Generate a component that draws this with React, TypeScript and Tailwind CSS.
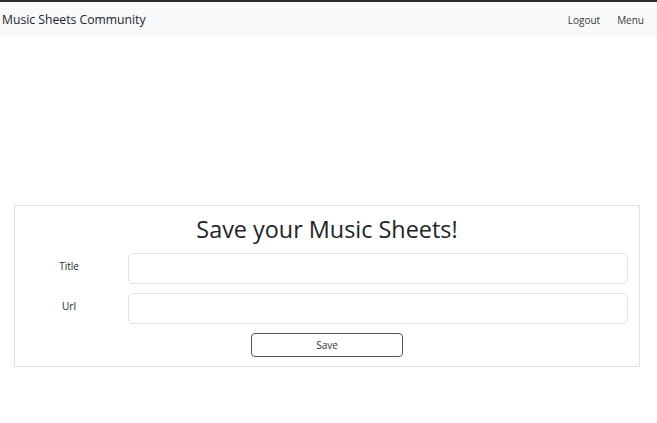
import React from "react";

export default function App() {
  return (
    <div className="w-[657px] h-[423px] bg-white text-[#212529]" style={{ fontFamily: '"Open Sans", "Noto Sans", sans-serif' }}>
      <div className="h-[2px] bg-[#2b2b2b]" />
      <nav className="h-[34px] bg-[#f8f9fa] flex items-center justify-between pl-[2px] pr-[13px]">
        <span className="text-[12.2px] mt-[2px]">Music Sheets Community</span>
        <div className="flex items-center gap-[17px] text-[10px] text-[#3b3b3b] mt-[2px]">
          <span>Logout</span>
          <span>Menu</span>
        </div>
      </nav>
      <div className="pt-[169px] pl-[14px]">
        <div className="w-[626px] h-[162px] border border-[#dee2e6] flex flex-col">
          <h1 className="text-center text-[23.4px] leading-[30px] mt-[8px]">Save your Music Sheets!</h1>
          <div className="flex items-center mt-[9px] gap-[5px]">
            <label className="w-[108px] text-center text-[10px] mt-[-4px]">Title</label>
            <div className="w-[500px] h-[31px] rounded-[5px] border border-[#dee2e6]" />
          </div>
          <div className="flex items-center mt-[9px] gap-[5px]">
            <label className="w-[108px] text-center text-[10px] mt-[-4px]">Url</label>
            <div className="w-[500px] h-[31px] rounded-[5px] border border-[#dee2e6]" />
          </div>
          <div className="flex justify-center mt-[9px]">
            <button className="w-[152px] h-[24px] rounded-[4px] border border-[#555] text-[10px] text-[#333]">Save</button>
          </div>
        </div>
      </div>
    </div>
  );
}
